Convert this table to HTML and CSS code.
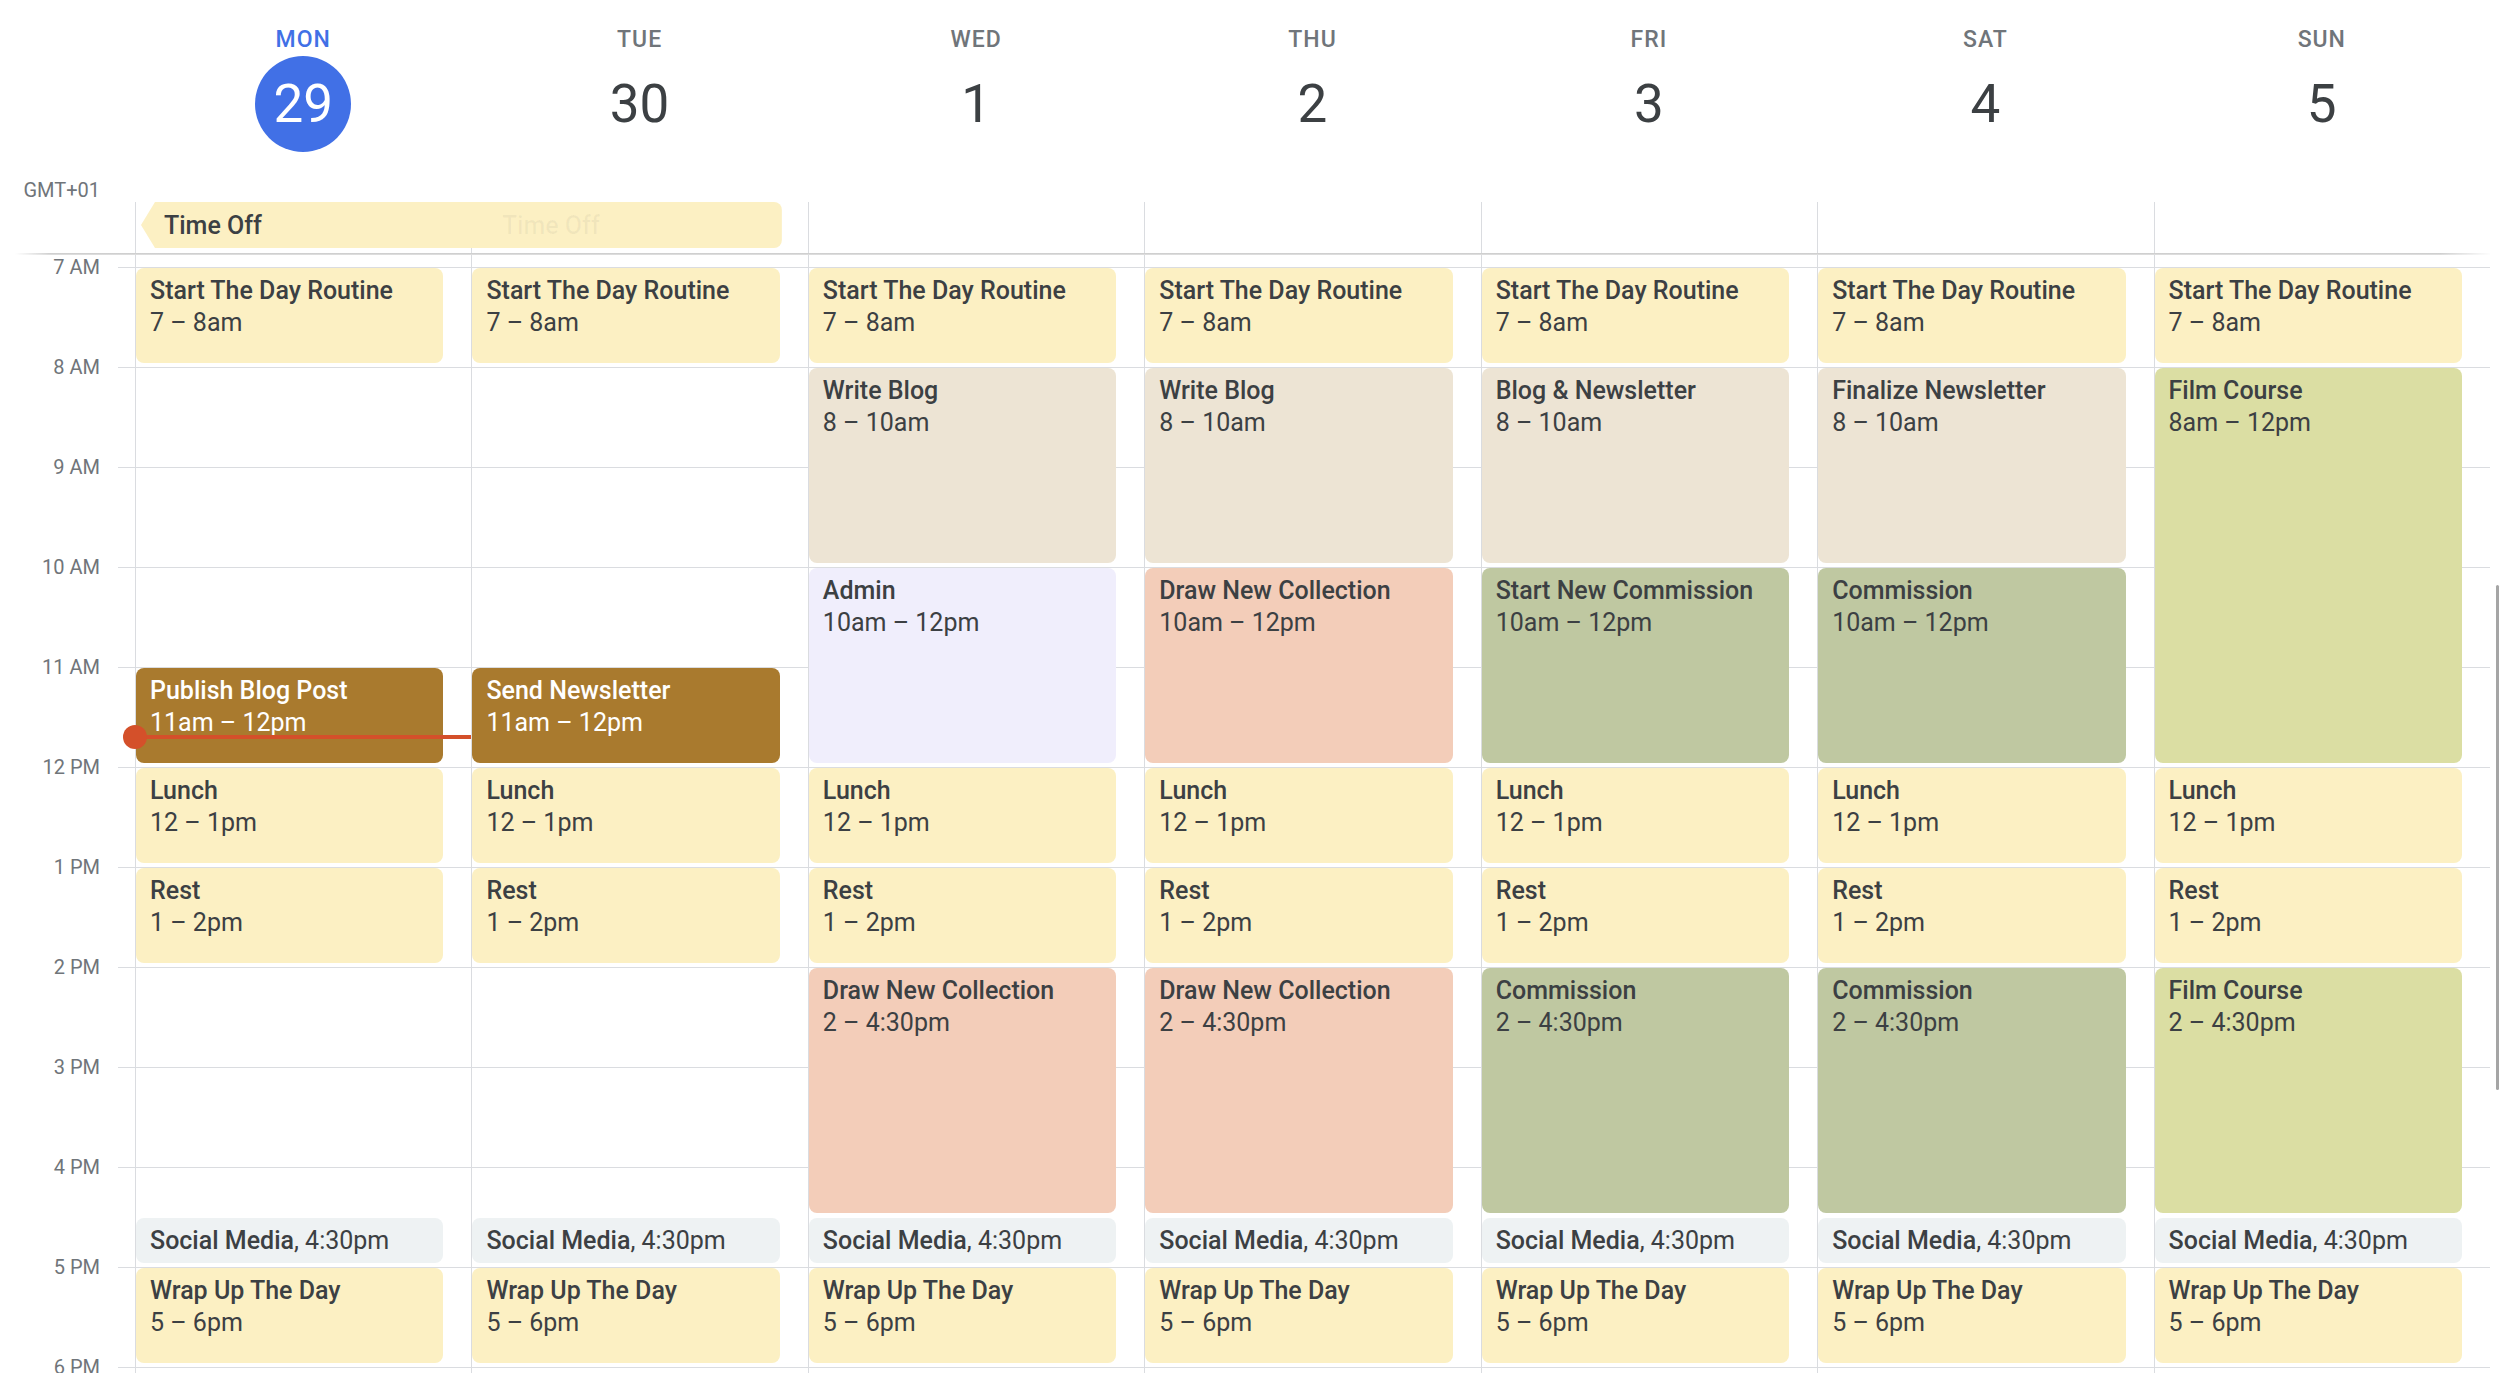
FILE: index.html
```html
<!DOCTYPE html>
<html lang="en">
<head>
<meta charset="utf-8">
<title>Week</title>
<link rel="stylesheet" href="styles.css">
</head>
<body>
<div class="cal">
  <div class="top">
    <div class="tz">GMT+01</div>
    <div class="dayhead"><div class="dname today">MON</div><div class="dnum today">29</div></div>
    <div class="dayhead"><div class="dname">TUE</div><div class="dnum">30</div></div>
    <div class="dayhead"><div class="dname">WED</div><div class="dnum">1</div></div>
    <div class="dayhead"><div class="dname">THU</div><div class="dnum">2</div></div>
    <div class="dayhead"><div class="dname">FRI</div><div class="dnum">3</div></div>
    <div class="dayhead"><div class="dname">SAT</div><div class="dnum">4</div></div>
    <div class="dayhead"><div class="dname">SUN</div><div class="dnum">5</div></div>
    <div class="adcell c1"></div>
    <div class="adcell c2"></div>
    <div class="adcell c3"></div>
    <div class="adcell c4"></div>
    <div class="adcell c5"></div>
    <div class="adcell c6"></div>
    <div class="adcell c7"></div>
    <div class="chip"><span class="chip-t">Time Off</span><span class="chip-ghost">Time Off</span></div>
  </div>
  <div class="divider"></div>
  <div class="body">
    <div class="gutter">
      <div class="hl">7 AM</div><div class="hl">8 AM</div><div class="hl">9 AM</div><div class="hl">10 AM</div>
      <div class="hl">11 AM</div><div class="hl">12 PM</div><div class="hl">1 PM</div><div class="hl">2 PM</div>
      <div class="hl">3 PM</div><div class="hl">4 PM</div><div class="hl">5 PM</div><div class="hl">6 PM</div>
    </div>

    <div class="col">
      <div class="ev y" style="top:13px;height:95px"><div class="t">Start The Day Routine</div><div>7 – 8am</div></div>
      <div class="ev brown" style="top:413px;height:95px"><div class="t">Publish Blog Post</div><div>11am – 12pm</div></div>
      <div class="ev y" style="top:513px;height:95px"><div class="t">Lunch</div><div>12 – 1pm</div></div>
      <div class="ev y" style="top:613px;height:95px"><div class="t">Rest</div><div>1 – 2pm</div></div>
      <div class="ev soc" style="top:963px;height:45px"><div><span class="t">Social Media</span>, 4:30pm</div></div>
      <div class="ev y" style="top:1013px;height:95px"><div class="t">Wrap Up The Day</div><div>5 – 6pm</div></div>
      <div class="now"><div class="now-dot"></div></div>
    </div>

    <div class="col">
      <div class="ev y" style="top:13px;height:95px"><div class="t">Start The Day Routine</div><div>7 – 8am</div></div>
      <div class="ev brown" style="top:413px;height:95px"><div class="t">Send Newsletter</div><div>11am – 12pm</div></div>
      <div class="ev y" style="top:513px;height:95px"><div class="t">Lunch</div><div>12 – 1pm</div></div>
      <div class="ev y" style="top:613px;height:95px"><div class="t">Rest</div><div>1 – 2pm</div></div>
      <div class="ev soc" style="top:963px;height:45px"><div><span class="t">Social Media</span>, 4:30pm</div></div>
      <div class="ev y" style="top:1013px;height:95px"><div class="t">Wrap Up The Day</div><div>5 – 6pm</div></div>
    </div>

    <div class="col">
      <div class="ev y" style="top:13px;height:95px"><div class="t">Start The Day Routine</div><div>7 – 8am</div></div>
      <div class="ev beige" style="top:113px;height:195px"><div class="t">Write Blog</div><div>8 – 10am</div></div>
      <div class="ev lav" style="top:313px;height:195px"><div class="t">Admin</div><div>10am – 12pm</div></div>
      <div class="ev y" style="top:513px;height:95px"><div class="t">Lunch</div><div>12 – 1pm</div></div>
      <div class="ev y" style="top:613px;height:95px"><div class="t">Rest</div><div>1 – 2pm</div></div>
      <div class="ev sal" style="top:713px;height:245px"><div class="t">Draw New Collection</div><div>2 – 4:30pm</div></div>
      <div class="ev soc" style="top:963px;height:45px"><div><span class="t">Social Media</span>, 4:30pm</div></div>
      <div class="ev y" style="top:1013px;height:95px"><div class="t">Wrap Up The Day</div><div>5 – 6pm</div></div>
    </div>

    <div class="col">
      <div class="ev y" style="top:13px;height:95px"><div class="t">Start The Day Routine</div><div>7 – 8am</div></div>
      <div class="ev beige" style="top:113px;height:195px"><div class="t">Write Blog</div><div>8 – 10am</div></div>
      <div class="ev sal" style="top:313px;height:195px"><div class="t">Draw New Collection</div><div>10am – 12pm</div></div>
      <div class="ev y" style="top:513px;height:95px"><div class="t">Lunch</div><div>12 – 1pm</div></div>
      <div class="ev y" style="top:613px;height:95px"><div class="t">Rest</div><div>1 – 2pm</div></div>
      <div class="ev sal" style="top:713px;height:245px"><div class="t">Draw New Collection</div><div>2 – 4:30pm</div></div>
      <div class="ev soc" style="top:963px;height:45px"><div><span class="t">Social Media</span>, 4:30pm</div></div>
      <div class="ev y" style="top:1013px;height:95px"><div class="t">Wrap Up The Day</div><div>5 – 6pm</div></div>
    </div>

    <div class="col">
      <div class="ev y" style="top:13px;height:95px"><div class="t">Start The Day Routine</div><div>7 – 8am</div></div>
      <div class="ev beige" style="top:113px;height:195px"><div class="t">Blog &amp; Newsletter</div><div>8 – 10am</div></div>
      <div class="ev sage" style="top:313px;height:195px"><div class="t">Start New Commission</div><div>10am – 12pm</div></div>
      <div class="ev y" style="top:513px;height:95px"><div class="t">Lunch</div><div>12 – 1pm</div></div>
      <div class="ev y" style="top:613px;height:95px"><div class="t">Rest</div><div>1 – 2pm</div></div>
      <div class="ev sage" style="top:713px;height:245px"><div class="t">Commission</div><div>2 – 4:30pm</div></div>
      <div class="ev soc" style="top:963px;height:45px"><div><span class="t">Social Media</span>, 4:30pm</div></div>
      <div class="ev y" style="top:1013px;height:95px"><div class="t">Wrap Up The Day</div><div>5 – 6pm</div></div>
    </div>

    <div class="col">
      <div class="ev y" style="top:13px;height:95px"><div class="t">Start The Day Routine</div><div>7 – 8am</div></div>
      <div class="ev beige" style="top:113px;height:195px"><div class="t">Finalize Newsletter</div><div>8 – 10am</div></div>
      <div class="ev sage" style="top:313px;height:195px"><div class="t">Commission</div><div>10am – 12pm</div></div>
      <div class="ev y" style="top:513px;height:95px"><div class="t">Lunch</div><div>12 – 1pm</div></div>
      <div class="ev y" style="top:613px;height:95px"><div class="t">Rest</div><div>1 – 2pm</div></div>
      <div class="ev sage" style="top:713px;height:245px"><div class="t">Commission</div><div>2 – 4:30pm</div></div>
      <div class="ev soc" style="top:963px;height:45px"><div><span class="t">Social Media</span>, 4:30pm</div></div>
      <div class="ev y" style="top:1013px;height:95px"><div class="t">Wrap Up The Day</div><div>5 – 6pm</div></div>
    </div>

    <div class="col">
      <div class="ev y" style="top:13px;height:95px"><div class="t">Start The Day Routine</div><div>7 – 8am</div></div>
      <div class="ev olive" style="top:113px;height:395px"><div class="t">Film Course</div><div>8am – 12pm</div></div>
      <div class="ev y" style="top:513px;height:95px"><div class="t">Lunch</div><div>12 – 1pm</div></div>
      <div class="ev y" style="top:613px;height:95px"><div class="t">Rest</div><div>1 – 2pm</div></div>
      <div class="ev olive" style="top:713px;height:245px"><div class="t">Film Course</div><div>2 – 4:30pm</div></div>
      <div class="ev soc" style="top:963px;height:45px"><div><span class="t">Social Media</span>, 4:30pm</div></div>
      <div class="ev y" style="top:1013px;height:95px"><div class="t">Wrap Up The Day</div><div>5 – 6pm</div></div>
    </div>
  </div>
</div>
<div class="thumb"></div>
</body>
</html>
```

FILE: styles.css
```css
html, body {
  margin: 0;
  padding: 0;
  background: #fff;
}

body {
  font-family: Roboto, "Noto Sans", "Liberation Sans", sans-serif;
  color: #3c4043;
  width: 2500px;
  height: 1373px;
  overflow: hidden;
  position: relative;
}

.cal {
  width: 2490px;
}

/* ---------- header ---------- */
.top {
  display: grid;
  grid-template-columns: 135px repeat(7, 1fr);
  grid-template-rows: 202px 51px;
}

.tz {
  grid-row: 1;
  grid-column: 1;
  align-self: end;
  text-align: right;
  padding-right: 35px;
  font-size: 20px;
  line-height: 24px;
  color: #70757a;
}

.dayhead {
  grid-row: 1;
  display: flex;
  flex-direction: column;
  align-items: center;
  padding-top: 24px;
}

.dname {
  font-size: 23px;
  font-weight: 500;
  line-height: 32px;
  letter-spacing: 1px;
  color: #70757a;
}

.dname.today {
  color: #4170e6;
}

.dnum {
  width: 96px;
  height: 96px;
  border-radius: 50%;
  display: flex;
  align-items: center;
  justify-content: center;
  font-size: 53px;
  line-height: 1;
  color: #3c4043;
}

.dnum.today {
  background: #4170e6;
  color: #fff;
}

.adcell {
  grid-row: 2;
  border-left: 1px solid #dadce0;
}
.c1 { grid-column: 2; }
.c2 { grid-column: 3; }
.c3 { grid-column: 4; }
.c4 { grid-column: 5; }
.c5 { grid-column: 6; }
.c6 { grid-column: 7; }
.c7 { grid-column: 8; }

.chip {
  grid-row: 2;
  grid-column: 2 / 4;
  z-index: 1;
  margin: 0 26px 5px 6px;
  background: #fcf0c3;
  border-radius: 0 8px 8px 0;
  clip-path: polygon(14px 0, 100% 0, 100% 100%, 14px 100%, 0 50%);
  display: flex;
  align-items: center;
  padding-left: 23px;
  font-size: 25px;
  font-weight: 500;
  white-space: nowrap;
}

.chip-ghost {
  margin-left: 240px;
  color: rgba(60, 64, 67, 0.06);
}

.divider {
  height: 2px;
  background: linear-gradient(to bottom, #c9c9c9, #e3e3e3);
  -webkit-mask-image: linear-gradient(to right, transparent 15px, #000 50px, #000 2440px, transparent 2492px);
  mask-image: linear-gradient(to right, transparent 15px, #000 50px, #000 2440px, transparent 2492px);
}

/* ---------- body ---------- */
.body {
  display: grid;
  grid-template-columns: 135px repeat(7, 1fr);
  height: 1118px;
  overflow: hidden;
}

.gutter {
  background-image: linear-gradient(to bottom, #dadce0 0 1px, transparent 1px);
  background-size: 17px 100px;
  background-position: right 0 top 12px;
  background-repeat: repeat-y;
}

.hl {
  height: 100px;
  line-height: 24px;
  text-align: right;
  padding-right: 35px;
  font-size: 20px;
  color: #70757a;
}

.col {
  position: relative;
  border-left: 1px solid #dadce0;
  background-image: linear-gradient(to bottom, #dadce0 0 1px, transparent 1px);
  background-size: 100% 100px;
  background-position: 0 12px;
  background-repeat: repeat-y;
}

.ev {
  position: absolute;
  left: 0;
  width: calc(100% - 28px);
  box-sizing: border-box;
  padding: 7px 14px;
  border-radius: 8px;
  font-size: 25px;
  line-height: 32px;
  white-space: nowrap;
  overflow: hidden;
}

.t {
  font-weight: 500;
}

.y { background: #fcf0c3; }
.beige { background: #ede4d4; }
.lav { background: #f0eefc; }
.sal { background: #f3cdb9; }
.sage { background: #bfc8a1; }
.olive { background: #dbdea3; }
.soc { background: #eef2f3; }
.brown { background: #a97a2e; color: #fff; }

.now {
  position: absolute;
  left: -1px;
  right: 0;
  top: 480px;
  height: 4px;
  background: #d4502a;
  z-index: 3;
}

.now-dot {
  position: absolute;
  left: -12px;
  top: -10px;
  width: 24px;
  height: 24px;
  border-radius: 50%;
  background: #d4502a;
}

.thumb {
  position: absolute;
  left: 2496px;
  top: 585px;
  width: 3px;
  height: 505px;
  border-radius: 2px;
  background: #a5a5a5;
}
```
